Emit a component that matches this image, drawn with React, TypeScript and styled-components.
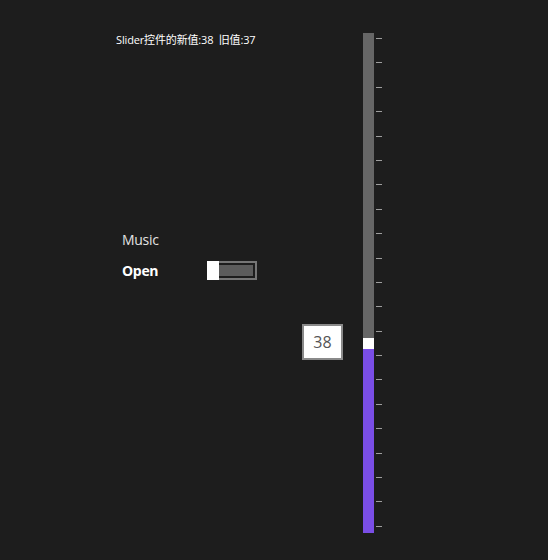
import React from "react";
import styled, { createGlobalStyle } from "styled-components";

const Global = createGlobalStyle`
  html, body { margin: 0; padding: 0; background: #1d1d1d; }
  body { font-family: "Segoe UI", "Open Sans", "Noto Sans CJK SC", sans-serif; }
`;

const Page = styled.div`
  display: flex;
  width: 548px;
  height: 560px;
  background: #1d1d1d;
  box-sizing: border-box;
  padding-top: 33px;
`;

const LeftColumn = styled.div`
  display: flex;
  flex-direction: column;
  width: 247px;
  padding-left: 116px;
`;

const Header = styled.div`
  font-family: "Open Sans", "Noto Sans CJK SC", sans-serif;
  font-size: 11px;
  line-height: 13px;
  color: #ffffff;
  white-space: pre;
  letter-spacing: -0.15px;
`;

const Settings = styled.div`
  display: flex;
  flex-direction: column;
  margin-top: 184px;
  padding-left: 6px;
  gap: 11px;
`;

const Label = styled.div<{ $bold?: boolean }>`
  font-family: "Open Sans", sans-serif;
  font-size: 14px;
  line-height: 19px;
  color: ${(p) => (p.$bold ? "#ffffff" : "#e2e2e2")};
  font-weight: ${(p) => (p.$bold ? 700 : 400)};
  letter-spacing: -0.3px;
`;

const Row = styled.div`
  display: flex;
  align-items: center;
`;

const RowLabel = styled(Label)`
  width: 85px;
`;

const Toggle = styled.div`
  position: relative;
  width: 50px;
  height: 19px;
  box-sizing: border-box;
  border: 2px solid #767676;
  padding: 2px;
  margin-top: 1px;
`;

const ToggleFill = styled.div`
  width: 100%;
  height: 100%;
  background: #5c5c5c;
`;

const ToggleThumb = styled.div`
  position: absolute;
  left: -2px;
  top: -2px;
  width: 12px;
  height: 19px;
  background: #ffffff;
`;

const SliderArea = styled.div`
  display: flex;
  gap: 2px;
`;

const Track = styled.div`
  position: relative;
  width: 11px;
  height: 500px;
  background: #666666;
`;

const Fill = styled.div`
  position: absolute;
  left: 0;
  right: 0;
  bottom: 0;
  background: #7a4ee6;
`;

const Thumb = styled.div`
  position: absolute;
  left: 0;
  width: 11px;
  height: 11px;
  background: #ffffff;
`;

const ValueTip = styled.div`
  position: absolute;
  right: 31px;
  width: 41px;
  height: 36px;
  box-sizing: border-box;
  border: 2px solid #8a8a8a;
  background: #ffffff;
  display: flex;
  align-items: center;
  justify-content: center;
  font-family: "Open Sans", sans-serif;
  font-size: 16px;
  color: #555555;
`;

const Ticks = styled.div`
  display: flex;
  flex-direction: column;
  justify-content: space-between;
  height: 489px;
  padding-top: 5px;
`;

const Tick = styled.div`
  width: 6px;
  height: 1px;
  background: #9e9e9e;
`;

export default function App() {
  const value = 38;
  const oldValue = 37;
  const trackH = 500;
  const thumbH = 11;
  const thumbTop = Math.round((trackH - thumbH) * (1 - value / 100)) + 2;
  const fillH = trackH - thumbTop - thumbH;
  return (
    <>
      <Global />
      <Page>
        <LeftColumn>
          <Header>{`Slider控件的新值:${value}  旧值:${oldValue}`}</Header>
          <Settings>
            <Label>Music</Label>
            <Row>
              <RowLabel $bold>Open</RowLabel>
              <Toggle>
                <ToggleFill />
                <ToggleThumb />
              </Toggle>
            </Row>
          </Settings>
        </LeftColumn>
        <SliderArea>
          <Track>
            <Fill style={{ height: fillH }} />
            <Thumb style={{ top: thumbTop }} />
            <ValueTip style={{ top: thumbTop + Math.floor(thumbH / 2) - 19 }}>{value}</ValueTip>
          </Track>
          <Ticks>
            {Array.from({ length: 21 }).map((_, i) => (
              <Tick key={i} />
            ))}
          </Ticks>
        </SliderArea>
      </Page>
    </>
  );
}
